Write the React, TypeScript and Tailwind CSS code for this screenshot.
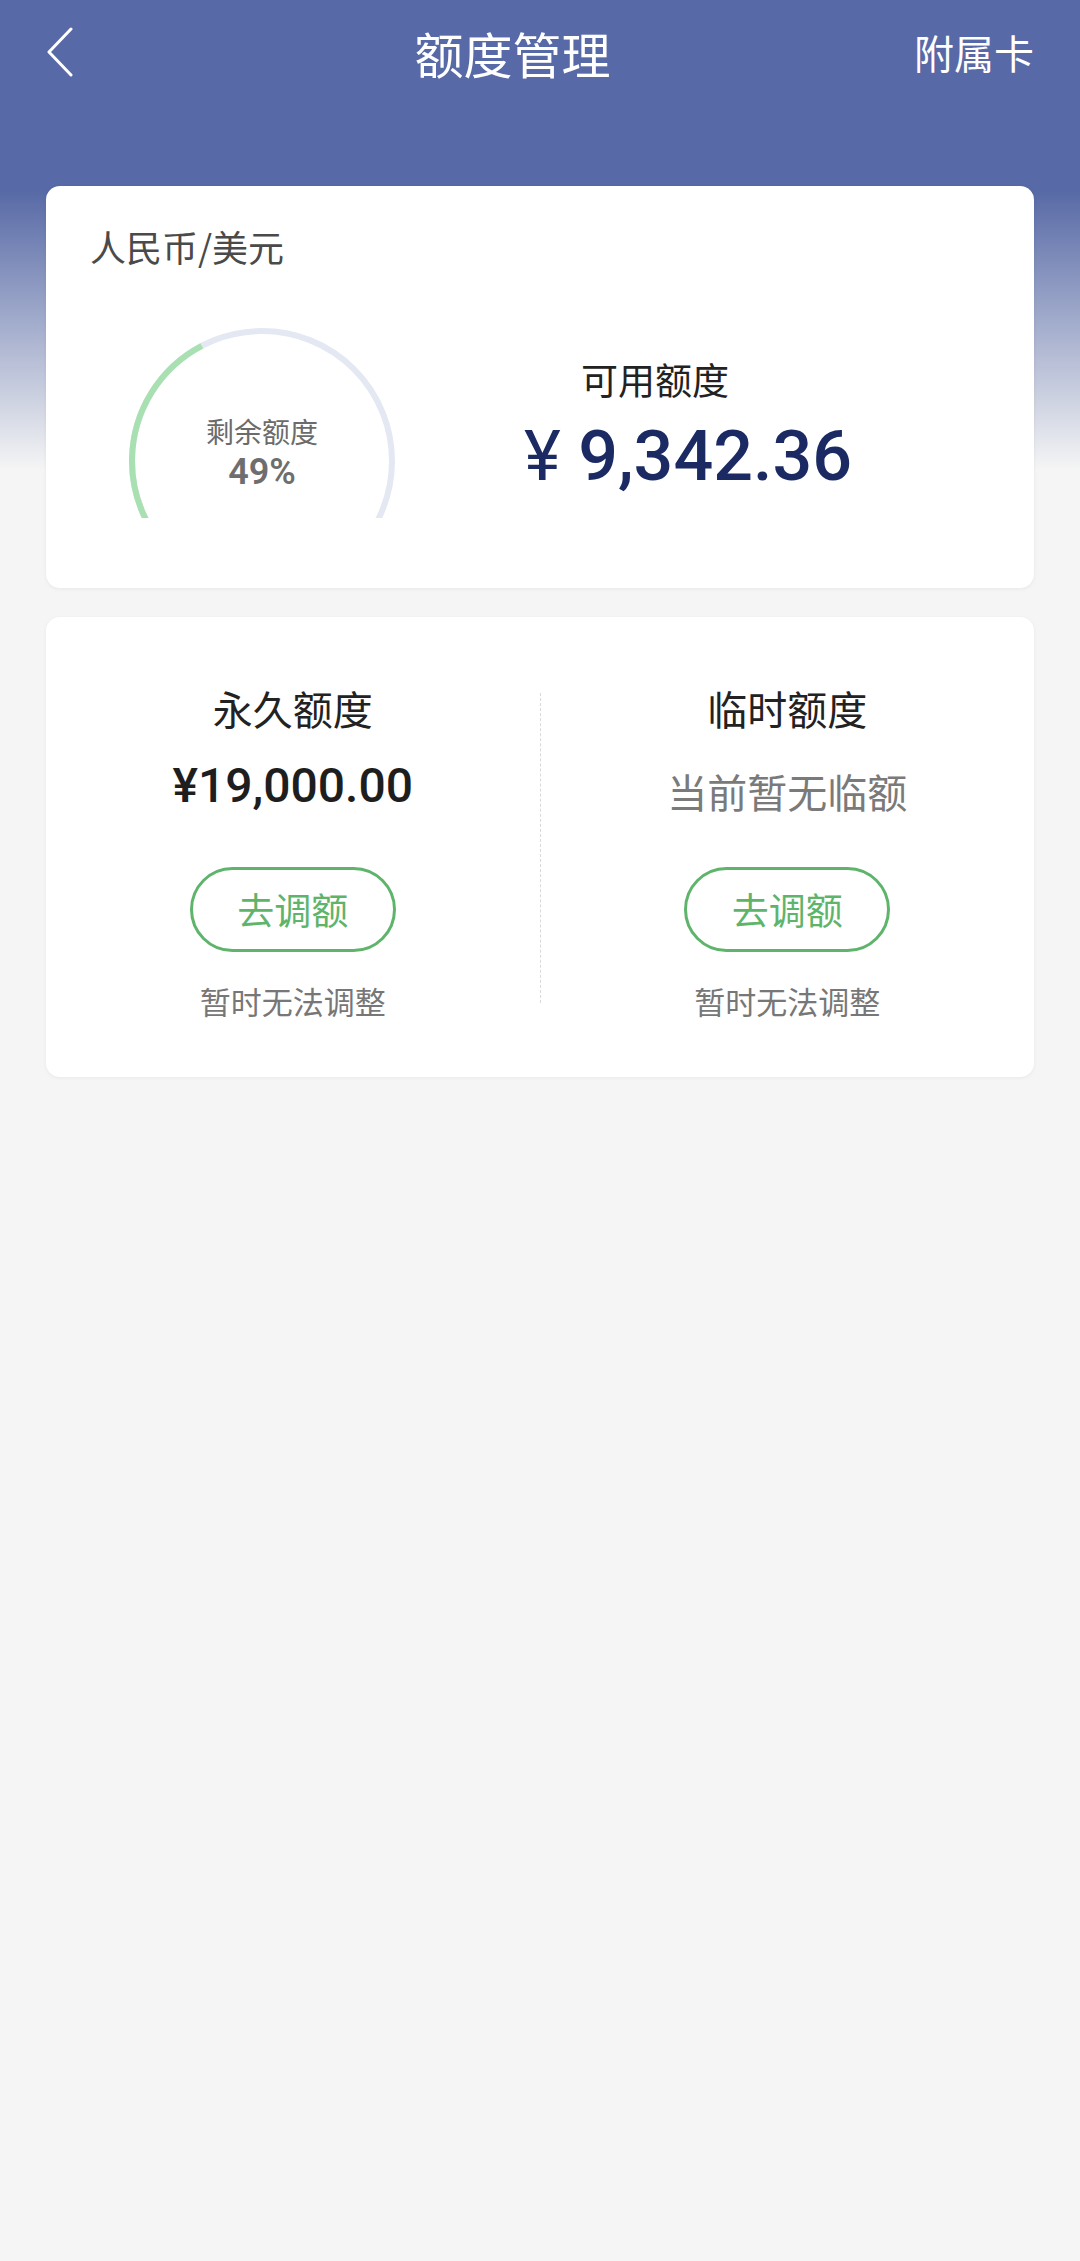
import React from "react";

const cjk = "font-['Noto_Sans_CJK_SC','Noto_Sans',sans-serif]";
const num = "font-['Roboto','Noto_Sans_CJK_SC',sans-serif]";

function Gauge() {
  return (
    <div className="relative w-[280px] h-[197px] overflow-hidden">
      <svg width="280" height="197" viewBox="0 0 280 197" fill="none">
        <circle cx="140" cy="140" r="130" stroke="#e4e8f2" strokeWidth="6" />
        <path d="M75 252.6 A130 130 0 0 1 79.8 24.8" stroke="#a9e0b2" strokeWidth="6" />
      </svg>
      <div className="absolute inset-x-0 top-[96px] flex flex-col items-center">
        <span className={`${cjk} text-[28px] leading-none text-[#6b6b6b]`}>剩余额度</span>
        <span className={`${num} mt-[9px] text-[36px] leading-none font-semibold text-[#6e6e6e]`}>49%</span>
      </div>
    </div>
  );
}

function QuotaColumn({ title, value, muted }: { title: string; value: string; muted?: boolean }) {
  return (
    <div className="flex flex-col items-center pt-[71px]">
      <div className={`${cjk} text-[40px] leading-none text-[#222]`}>{title}</div>
      <div className="h-[80px] mt-[29px] flex flex-col items-center">
        {muted ? (
          <span className={`${cjk} mt-[14px] text-[40px] leading-none text-[#7a7a7a]`}>{value}</span>
        ) : (
          <span className={`${num} mt-[5px] text-[48px] leading-none font-medium text-[#1e1e1e]`}>{value}</span>
        )}
      </div>
      <button className={`${cjk} mt-[30px] w-[206px] h-[85px] rounded-full border-[3px] border-[#5fb46b] text-[37px] leading-none text-[#5fb46b] bg-white`}>
        去调额
      </button>
      <div className={`${cjk} mt-[33px] text-[31px] leading-none text-[#777]`}>暂时无法调整</div>
    </div>
  );
}

export default function App() {
  return (
    <div className="min-h-[2261px] bg-[#f5f5f5] bg-[linear-gradient(180deg,#5769a6_0px,#5769a6_190px,#f5f5f5_470px)] bg-no-repeat">
      <div className="h-[104px] px-[46px] flex items-center">
        <div className="w-[65px] h-[48px] flex items-center">
          <svg width="28" height="50" viewBox="0 0 28 50" fill="none">
            <path d="M25 2 L3 25 L25 48" stroke="white" strokeWidth="3" strokeLinecap="round" strokeLinejoin="round" />
          </svg>
        </div>
        <div className={`${cjk} flex-1 text-center text-[49px] leading-none text-white`}>额度管理</div>
        <div className={`${cjk} text-[40px] leading-none text-white`}>附属卡</div>
      </div>

      <div className="px-[46px] pt-[82px] flex flex-col gap-[29px]">
        <div className="h-[402px] bg-white rounded-[14px] shadow-[0_1px_4px_rgba(0,0,0,0.06)] px-[44px] pt-[42px]">
          <div className={`${cjk} text-[36px] leading-none text-[#4a4a4a]`}>人民币/美元</div>
          <div className="mt-[57px] flex items-start">
            <div className="ml-[32px]">
              <Gauge />
            </div>
            <div className="ml-[122px] mt-[40px] flex flex-col">
              <div className={`${cjk} ml-[57px] text-[37px] leading-none text-[#222]`}>可用额度</div>
              <div className={`${num} mt-[23px] text-[70px] leading-none font-medium text-[#1b2a63]`}>
                <span className="font-normal">¥</span> 9,342.36
              </div>
            </div>
          </div>
        </div>

        <div className="h-[460px] bg-white rounded-[14px] shadow-[0_1px_4px_rgba(0,0,0,0.05)] grid grid-cols-[1fr_1px_1fr]">
          <QuotaColumn title="永久额度" value="¥19,000.00" />
          <div className="mt-[76px] h-[310px] border-l border-dashed border-[#d9d9d9]" />
          <QuotaColumn title="临时额度" value="当前暂无临额" muted />
        </div>
      </div>
    </div>
  );
}
